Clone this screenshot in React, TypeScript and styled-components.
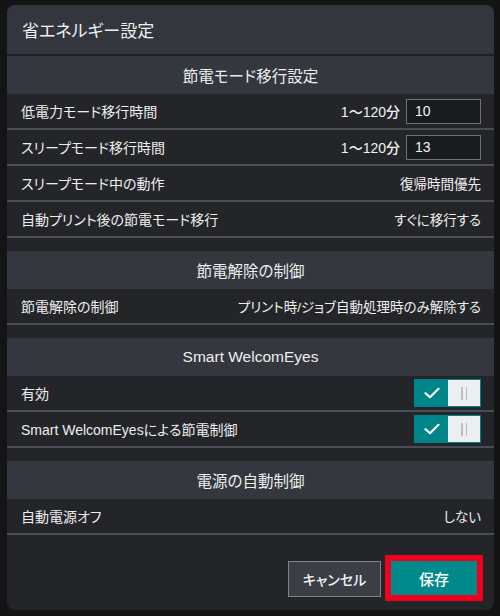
import React from "react";
import styled, { createGlobalStyle } from "styled-components";

const Global = createGlobalStyle`
  html, body { margin: 0; padding: 0; background: #141414; }
  body {
    font-family: "Liberation Sans", "Noto Sans CJK JP", sans-serif;
    font-feature-settings: "palt";
    color: #ececec;
  }
  * { box-sizing: border-box; }
`;

const Page = styled.div`
  padding: 5px 6px 6px 7px;
  width: 500px;
  height: 616px;
`;

const Dialog = styled.div`
  width: 487px;
  height: 605px;
  background: #242529;
  border-radius: 8px;
  overflow: hidden;
  display: flex;
  flex-direction: column;
`;

const Header = styled.div`
  height: 51px;
  flex: none;
  background: #33363c;
  border-bottom: 2px solid #1f2023;
  display: flex;
  align-items: center;
  padding-left: 15px;
  font-size: 17px;
  color: #f0f0f0;
`;

const Body = styled.div`
  flex: 1;
  display: flex;
  flex-direction: column;
`;

const SectionTitle = styled.div<{ $first?: boolean }>`
  height: 38px;
  flex: none;
  margin-top: ${(p) => (p.$first ? 0 : 13)}px;
  background: #34373e;
  display: flex;
  align-items: center;
  justify-content: center;
  font-size: 15.5px;
  color: #eeeeee;
`;

const Row = styled.div`
  height: 36px;
  flex: none;
  border-bottom: 2px solid #4a4d55;
  display: flex;
  align-items: center;
  justify-content: space-between;
  padding: 0 13px 0 14px;
  font-size: 14px;
  color: #eeeeee;
`;

const Label = styled.span``;

const Value = styled.span`
  font-size: 13.5px;
  color: #efefef;
`;

const Range = styled.div`
  display: flex;
  align-items: center;
  gap: 6px;
`;

const RangeText = styled.span`
  font-size: 14px;
  font-weight: 500;
  color: #f2f2f2;
`;

const NumInput = styled.input`
  width: 75px;
  height: 25px;
  background: #1a1b1e;
  border: 1px solid #6c707a;
  color: #f2f2f2;
  font-family: "Liberation Sans", sans-serif;
  font-size: 14px;
  padding: 0 8px;
  outline: none;
`;

const Toggle = styled.div`
  width: 67px;
  height: 28px;
  display: flex;
  border: 1px solid #00868a;
`;

const ToggleOn = styled.div`
  width: 33px;
  background: #00868a;
  display: flex;
  align-items: center;
  justify-content: center;
`;

const ToggleOff = styled.div`
  flex: 1;
  background: #eceef2;
  display: flex;
  align-items: center;
  justify-content: center;
  gap: 3px;
`;

const Grip = styled.span`
  width: 1.5px;
  height: 13px;
  background: #b9bdc7;
`;

const Footer = styled.div`
  flex: 1;
  display: flex;
  justify-content: flex-end;
  align-items: flex-start;
  padding: 20px 11px 0 0;
  gap: 4px;
`;

const CancelButton = styled.button`
  width: 93px;
  height: 36px;
  margin-top: 6px;
  background: #3b3e45;
  border: 1px solid #7f838d;
  color: #f4f4f4;
  font-family: "Noto Sans CJK JP", sans-serif;
  font-feature-settings: "palt";
  font-size: 14px;
  font-weight: 500;
`;

const Highlight = styled.div`
  border: 6px solid #f0001c;
  display: flex;
`;

const SaveButton = styled.button`
  width: 86px;
  height: 34px;
  background: #008a8c;
  border: none;
  color: #ffffff;
  font-family: "Noto Sans CJK JP", sans-serif;
  font-size: 15px;
  font-weight: 500;
`;

const Check = () => (
  <svg width="16" height="12" viewBox="0 0 16 12" fill="none">
    <path d="M1.5 6.2 L6 10.2 L14.5 1.8" stroke="#ffffff" strokeWidth="2.2" strokeLinecap="round" strokeLinejoin="round" />
  </svg>
);

const Switch = () => (
  <Toggle>
    <ToggleOn>
      <Check />
    </ToggleOn>
    <ToggleOff>
      <Grip />
      <Grip />
    </ToggleOff>
  </Toggle>
);

export default function App() {
  return (
    <>
      <Global />
      <Page>
        <Dialog>
          <Header>省エネルギー設定</Header>
          <Body>
            <SectionTitle $first>節電モード移行設定</SectionTitle>
            <Row>
              <Label>低電力モード移行時間</Label>
              <Range>
                <RangeText>1〜120分</RangeText>
                <NumInput defaultValue="10" />
              </Range>
            </Row>
            <Row>
              <Label>スリープモード移行時間</Label>
              <Range>
                <RangeText>1〜120分</RangeText>
                <NumInput defaultValue="13" />
              </Range>
            </Row>
            <Row>
              <Label>スリープモード中の動作</Label>
              <Value>復帰時間優先</Value>
            </Row>
            <Row>
              <Label>自動プリント後の節電モード移行</Label>
              <Value>すぐに移行する</Value>
            </Row>

            <SectionTitle>節電解除の制御</SectionTitle>
            <Row>
              <Label>節電解除の制御</Label>
              <Value>プリント時/ジョブ自動処理時のみ解除する</Value>
            </Row>

            <SectionTitle>Smart WelcomEyes</SectionTitle>
            <Row>
              <Label>有効</Label>
              <Switch />
            </Row>
            <Row>
              <Label>Smart WelcomEyesによる節電制御</Label>
              <Switch />
            </Row>

            <SectionTitle>電源の自動制御</SectionTitle>
            <Row>
              <Label>自動電源オフ</Label>
              <Value>しない</Value>
            </Row>

            <Footer>
              <CancelButton>キャンセル</CancelButton>
              <Highlight>
                <SaveButton>保存</SaveButton>
              </Highlight>
            </Footer>
          </Body>
        </Dialog>
      </Page>
    </>
  );
}
